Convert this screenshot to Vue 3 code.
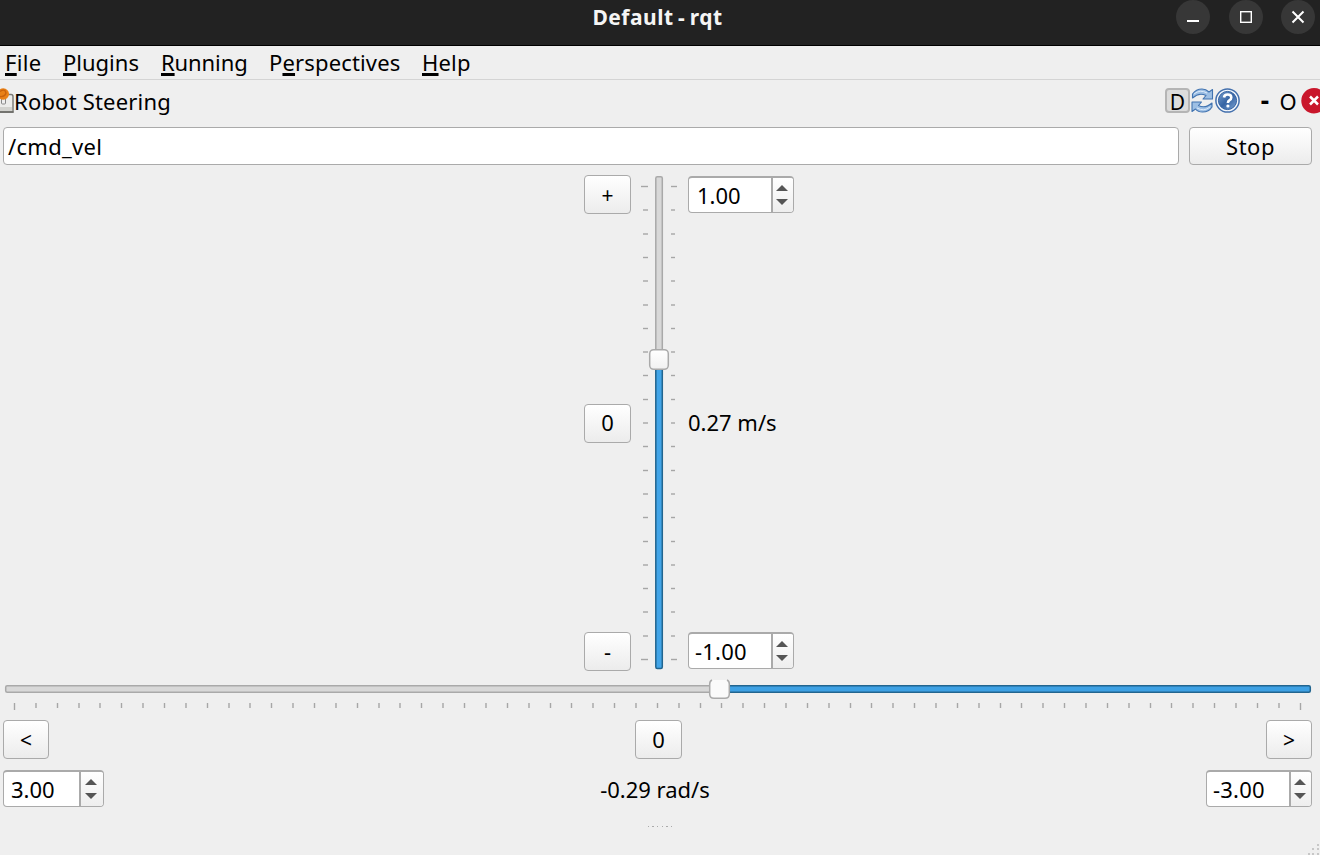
<script setup>
const menus = [
  { before: '', key: 'F', after: 'ile', cls: 'm-file' },
  { before: '', key: 'P', after: 'lugins', cls: 'm-plugins' },
  { before: '', key: 'R', after: 'unning', cls: 'm-running' },
  { before: 'P', key: 'e', after: 'rspectives', cls: 'm-persp' },
  { before: '', key: 'H', after: 'elp', cls: 'm-help' },
]
const vTicks = Array.from({ length: 21 }, (_, i) => ({
  y: Math.round((11.5 + i * 23.65) * 2) / 2,
  end: i === 0 || i === 20,
}))
const hTicks = Array.from({ length: 61 }, (_, i) => ({
  x: Math.round((11.5 + i * 21.43) * 2) / 2,
  end: i === 0 || i === 60,
}))
</script>

<template>
  <div class="window">
    <header class="titlebar">
      <span class="side"></span>
      <h1>Default - rqt</h1>
      <div class="side controls">
        <svg width="34" height="34" viewBox="0 0 34 34"><circle cx="17" cy="17" r="17" /><path d="M11 21H23" stroke-width="2" /></svg>
        <svg width="34" height="34" viewBox="0 0 34 34"><circle cx="17" cy="17" r="17" /><rect x="11.7" y="11.7" width="10.6" height="10.6" stroke-width="1.4" fill="none" /></svg>
        <svg width="34" height="34" viewBox="0 0 34 34"><circle cx="17" cy="17" r="17" /><path d="M11.5 11.5L22.5 22.5M22.5 11.5L11.5 22.5" stroke-width="2" /></svg>
      </div>
    </header>

    <nav class="menubar">
      <span v-for="m in menus" :key="m.key" :class="m.cls">{{ m.before }}<u>{{ m.key }}</u>{{ m.after }}</span>
    </nav>

    <div class="dock">
      <svg class="plug" width="14" height="25" viewBox="0 0 14 25">
        <path d="M-4 6.5H11Q13 6.5 13 8.500V24H-4Z" fill="#ececea" stroke="#777773" stroke-width="1.400" />
        <path d="M-4 19H12V23H-4Z" fill="#d2d2ce" />
        <path d="M-4 24H13.500" stroke="#696965" stroke-width="1.500" />
        <rect x="1.500" y="9" width="4" height="7" rx="1" fill="#eee" stroke="#888" />
        <circle cx="3.300" cy="6" r="5.700" fill="#e98118" />
        <path d="M0 3.500Q5 0 6 5Q5 9 0 8.500" fill="none" stroke="#c9620d" stroke-width="1.300" />
      </svg>
      <span class="dock-title">Robot Steering</span>
      <div class="dock-tools">
        <span class="d-btn"><span>D</span></span>
        <svg width="23" height="25" viewBox="0 0 23 25">
          <g fill="#9dbfe4" stroke="#4173b0" stroke-width="1.100" stroke-linejoin="round">
            <path d="M1.500 6Q5 1 11 1Q15 1 18 4L21.500 1.500V11H12L15 7.500Q8 4 1.500 10Z" />
            <path d="M21 19Q18 24 11.500 24Q7 24 4.500 21L1 23.500V14H10.500L7.500 17.500Q14 21 21 15Z" />
          </g>
          <path d="M3 6Q9 1 16 5M19 19Q13 24 6 20" fill="none" stroke="#dceafa" />
        </svg>
        <svg class="help" width="25" height="25" viewBox="0 0 25 25">
          <defs><linearGradient id="hg" x1="0" y1="0" x2="1" y2="1"><stop offset="0" stop-color="#789fce" /><stop offset=".5" stop-color="#3764a3" /><stop offset="1" stop-color="#7ba3d3" /></linearGradient></defs>
          <circle cx="12.500" cy="12.500" r="11.600" fill="#f3f7fc" stroke="#4470ad" stroke-width="1.500" />
          <circle cx="12.500" cy="12.500" r="9.100" fill="url(#hg)" stroke="#3764a3" />
          <path d="M9 9.500Q9.300 6.500 12.700 6.500Q16.300 6.500 16.300 9.400Q16.300 11.200 14.300 12.300Q12.900 13.200 12.900 15" fill="none" stroke="#fff" stroke-width="2.600" />
          <circle cx="12.900" cy="18" r="1.600" fill="#fff" />
        </svg>
        <span class="dash">-</span>
        <span class="oh">O</span>
        <svg class="close" width="19" height="26" viewBox="0 0 19 26">
          <circle cx="13" cy="12.700" r="12.700" fill="#c9162b" />
          <path d="M9 8.500L17 16.500M17 8.500L9 16.500" stroke="#fff" stroke-width="2.500" />
        </svg>
      </div>
    </div>

    <div class="topic-row">
      <div class="topic"><span>/cmd_vel</span></div>
      <div class="btn stop"><span>Stop</span></div>
    </div>

    <div class="linear">
      <div class="col buttons">
        <div class="btn sign">+</div>
        <div class="btn center">0</div>
        <div class="btn">-</div>
      </div>
      <svg class="vslider" width="38" height="496" viewBox="0 0 38 496">
        <defs><linearGradient id="hv" x2="0" y2="1"><stop stop-color="#fff" /><stop offset="1" stop-color="#f1f1f1" /></linearGradient></defs>
        <g stroke="#a6a6a6" stroke-width="1.400">
          <template v-for="t in vTicks" :key="t.y">
            <line :x1="t.end ? 0 : 2" :x2="7" :y1="t.y" :y2="t.y" />
            <line :x1="30" :x2="t.end ? 36 : 34" :y1="t.y" :y2="t.y" />
          </template>
        </g>
        <rect x="14.800" y="1.700" width="6.500" height="200" rx="1.500" fill="#d8d8d8" stroke="#a9a9a9" stroke-width="1.500" />
        <rect x="14.800" y="188" width="6.500" height="305.500" rx="1.500" fill="#42a5e8" stroke="#22658f" stroke-width="1.500" />
        <rect x="8.700" y="174.700" width="18.600" height="19.600" rx="4" fill="url(#hv)" stroke="#aaa" stroke-width="1.500" />
      </svg>
      <div class="col values">
        <div class="spin"><span class="num">1.00</span><span class="steps"><i class="up"></i><i class="down"></i></span></div>
        <span class="speed">0.27 m/s</span>
        <div class="spin"><span class="num minus">-1.00</span><span class="steps"><i class="up"></i><i class="down"></i></span></div>
      </div>
    </div>

    <svg class="hslider" width="1310" height="34" viewBox="0 0 1310 34">
      <g stroke="#a6a6a6" stroke-width="1.400">
        <line v-for="t in hTicks" :key="t.x" :x1="t.x" :x2="t.x" :y1="24" :y2="t.end ? 31 : 29" />
      </g>
      <rect x="2.700" y="6.700" width="720" height="6.500" rx="1.500" fill="#d8d8d8" stroke="#a9a9a9" stroke-width="1.500" />
      <rect x="716" y="6.700" width="591.300" height="6.500" rx="1.500" fill="#3ea1e4" stroke="#22658f" stroke-width="1.500" />
      <path d="M709 1Q706.700 2 706.700 5V15Q706.700 19.300 711 19.300H722Q726.300 19.300 726.300 15V5Q726.300 2 724 1Z" fill="#fafafa" />
      <path d="M709 1Q706.700 2 706.700 5V15Q706.700 19.300 711 19.300H722Q726.300 19.300 726.300 15V5Q726.300 2 724 1" fill="none" stroke="#aaa" stroke-width="1.500" />
    </svg>

    <div class="turn-row">
      <div class="btn sign">&lt;</div>
      <div class="btn zero">0</div>
      <div class="btn sign">&gt;</div>
    </div>
    <div class="angular-row">
      <div class="spin small"><span class="num">3.00</span><span class="steps"><i class="up"></i><i class="down"></i></span></div>
      <span class="rate">-0.29 rad/s</span>
      <div class="spin"><span class="num minus">-3.00</span><span class="steps"><i class="up"></i><i class="down"></i></span></div>
    </div>

    <footer>
      <svg class="handle" width="27" height="3" viewBox="0 0 27 3"><path d="M1 .5h1M5 .5h2M10 .5h1M15 .5h1M19 .5h2M24 .5h1" stroke="#aaa" /></svg>
      <svg class="grip" width="12" height="12" viewBox="0 0 12 12"><path d="M9 2h2M4 6h2M9 6h2M0 11h2M4 11h2M9 11h2" stroke="#bbb" stroke-width="1.500" /></svg>
    </footer>
  </div>
</template>

<style>
body { background: #efefef; overflow: hidden; }
</style>

<style scoped>
* { box-sizing: border-box; }
.window { width: 1320px; height: 855px; overflow: hidden; background: #efefef; color: #000; font: 22px/30px "Noto Sans", sans-serif; display: flex; flex-direction: column; white-space: nowrap; }
svg { display: block; flex: none; }
.titlebar { height: 46px; flex: none; background: #222; border-bottom: 1px solid #000; display: flex; }
.side { flex: 1; }
h1 { margin: 2px 0 0; font-size: 21px; line-height: 30px; font-weight: 700; color: #f5f5f5; letter-spacing: .5px; word-spacing: -1.500px; }
.controls { display: flex; justify-content: flex-end; gap: 18.500px; padding-right: 5px; }
.controls circle { fill: #373737; }
.controls path, .controls rect { stroke: #fff; }
.menubar { height: 34px; flex: none; border-bottom: 1px solid #d4d4d4; padding: 1px 0 0 5px; display: flex; }
.menubar span { flex: none; }
.menubar u { text-underline-offset: 2px; text-decoration-thickness: 3px; text-decoration-skip-ink: none; }
.m-file { width: 58px; letter-spacing: .3px; }
.m-plugins { width: 98px; }
.m-running { width: 108px; letter-spacing: -.1px; }
.m-persp { width: 153px; letter-spacing: .15px; }
.m-help { letter-spacing: .2px; }
.dock { height: 47px; flex: none; display: flex; align-items: flex-start; }
.plug { margin-top: 8px; }
.dock-title { margin-top: 6px; letter-spacing: .2px; }
.dock-tools { margin-left: auto; margin-top: 8px; display: flex; }
.d-btn { width: 25px; height: 25px; border: 2px solid #b5b5b5; border-radius: 4px; background: #dcdcdc; font-size: 21px; line-height: 25px; text-align: center; margin-right: 1px; }
.help { margin-left: 1px; }
.dash { font-weight: 700; font-size: 26px; width: 20px; text-align: center; margin-left: 15px; line-height: 24px; }
.oh { width: 25px; text-align: center; line-height: 27px; padding-right: 1px; margin-left: 1px; }
.topic-row { display: flex; height: 38px; flex: none; padding: 0 8px 0 3px; gap: 10px; }
.topic { flex: 1; background: #fff; border: 1.500px solid #aaa; border-radius: 4px; padding: 3px 4px; letter-spacing: .3px; }
.btn { width: 47px; height: 39px; flex: none; border: 1.500px solid #aaa; border-radius: 4px; background: linear-gradient(#fff, #ececec); display: flex; align-items: center; justify-content: center; padding-bottom: 1px; }
.sign { font-size: 21px; padding-bottom: 0; }
.center { padding-bottom: 2px; }
.stop { width: 123px; height: 38px; letter-spacing: .5px; }
.linear { height: 496px; flex: none; margin: 10px 0 0 584px; display: flex; }
.col { display: flex; flex-direction: column; justify-content: space-between; }
.vslider { margin-left: 10px; }
.values { margin-left: 9px; padding: 1px 0 2px; }
.speed { position: relative; top: -1px; }
.spin { width: 106px; height: 37px; flex: none; border: 1.500px solid #aaa; border-top-width: 2px; border-radius: 4px; background: #fff; display: flex; overflow: hidden; }
.small { width: 101px; }
.num { flex: 1; padding: 2px 0 0 8px; line-height: 30px; }
.minus { padding-left: 6px; letter-spacing: .2px; }
.small .num { padding-left: 7px; }
.steps { width: 22px; padding-right: 2px; border-left: 2px solid #aaa; background: linear-gradient(#fff, #eee); display: flex; flex-direction: column; align-items: center; justify-content: center; gap: 8px; }
.small .steps { width: 24px; }
.steps i { border: 6px solid transparent; width: 0; height: 0; }
.steps .up { border-top: 0; border-bottom: 6px solid #555; }
.steps .down { border-bottom: 0; border-top: 6px solid #555; }
.hslider { margin: 8px 0 0 3px; }
.turn-row, .angular-row { display: flex; justify-content: space-between; padding: 0 8px 0 3px; flex: none; }
.turn-row { margin-top: 7px; }
.turn-row .btn { width: 46px; }
.turn-row .zero { width: 47px; margin-left: 2px; }
.angular-row { margin-top: 11px; height: 37px; align-items: center; }
footer { flex: 1; display: flex; flex-direction: column; align-items: center; padding-top: 19px; }
.grip { align-self: flex-end; margin-top: 14px; }
</style>
